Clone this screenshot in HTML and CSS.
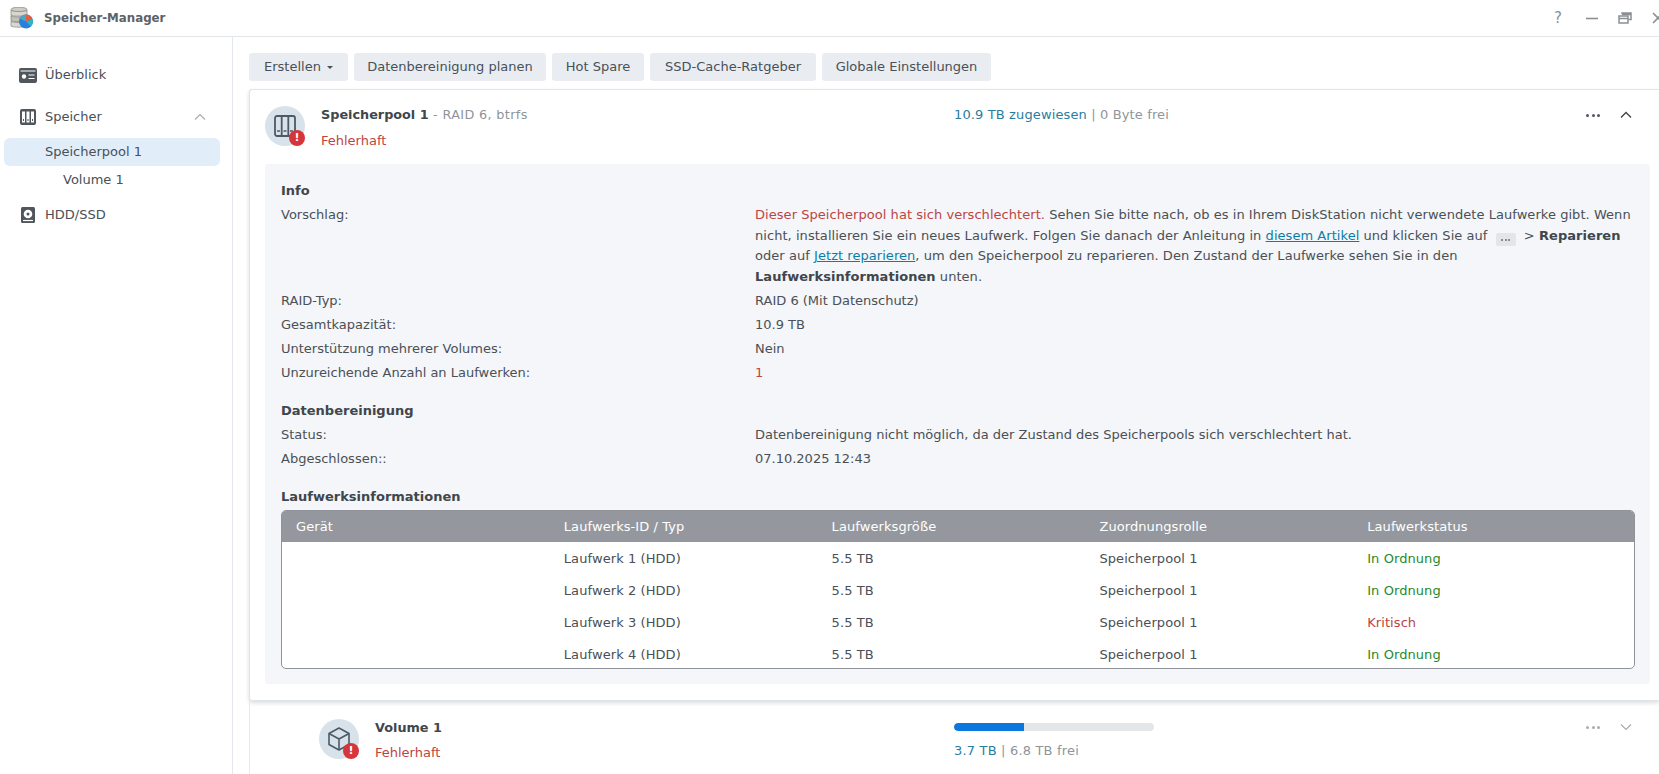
FILE: index.html
```html
<!DOCTYPE html>
<html lang="de">
<head>
<meta charset="utf-8">
<title>Speicher-Manager</title>
<link rel="stylesheet" href="styles.css">
</head>
<body>
<div class="app">
  <header class="titlebar">
    <svg class="logo" width="24" height="22" viewBox="0 0 24 22">
      <ellipse cx="9" cy="2.500" rx="8" ry="2.300" fill="#cfccc4" stroke="#8d8d88" stroke-width=".8"/>
      <path d="M1 3V8C1 9.500 17 9.500 17 8V3C17 5 1 5 1 3Z" fill="#d9d6cf" stroke="#8d8d88" stroke-width=".8"/>
      <path d="M1 8.500V13.500C1 15 17 15 17 13.500V8.500C17 10.500 1 10.500 1 8.500Z" fill="#c4c1b9" stroke="#85857f" stroke-width=".8"/>
      <path d="M1 14V19C1 20.500 17 20.500 17 19V14C17 16 1 16 1 14Z" fill="#d9d6cf" stroke="#8d8d88" stroke-width=".8"/>
      <circle cx="16" cy="14.500" r="7" fill="#2a7fde"/>
      <path d="M16 14.500V7.500A7 7 0 0 1 22.600 12.200Z" fill="#e2603c"/>
      <path d="M16 14.500L22.600 12.200A7 7 0 0 1 21 19.400Z" fill="#2fb3c6"/>
      <path d="M16 14.500V7.500A7 7 0 0 0 9.700 11.500Z" fill="#4ea5c9"/>
    </svg>
    <span class="app-title">Speicher-Manager</span>
    <div class="win-buttons">
      <span class="help">?</span>
      <svg width="14" height="14" viewBox="0 0 14 14"><path d="M1 7.500H13" stroke="#8b8f94" stroke-width="1.600"/></svg>
      <svg width="14" height="14" viewBox="0 0 14 14" fill="none" stroke="#8b8f94" stroke-width="1.500"><rect x="1" y="5" width="9" height="7"/><path d="M1 7.500H10M4 3V2H13V8.500H10.500M4 3.500H13"/></svg>
      <svg class="close" width="14" height="14" viewBox="0 0 14 14"><path d="M2 2L12 12M12 2L2 12" stroke="#8b8f94" stroke-width="1.600"/></svg>
    </div>
  </header>
  <div class="main">
    <nav class="sidebar">
      <div class="nav-item first">
        <svg width="18" height="15" viewBox="0 0 18 15"><rect width="18" height="15" rx="2" fill="#50565c"/><circle cx="5" cy="8.500" r="2.200" fill="#fff"/><path d="M9.500 7H15.500M9.500 10.500H15.500M1.500 3H16.500" stroke="#fff" stroke-width="1.200"/></svg>
        <span>Überblick</span>
      </div>
      <div class="nav-item second">
        <svg width="16" height="16" viewBox="0 0 16 16"><rect width="16" height="16" rx="2" fill="#50565c"/><path d="M2 2.500H5V13.500H2ZM6.500 2.500H9.500V13.500H6.500ZM11 2.500H14V13.500H11Z" fill="#fff"/><path d="M3.500 10V12M8 10V12M12.500 10V12" stroke="#50565c" stroke-width="1"/></svg>
        <span>Speicher</span>
        <svg class="nav-chevron" width="12" height="8" viewBox="0 0 12 8"><path d="M1 6.500L6 1.500L11 6.500" fill="none" stroke="#a9adb1" stroke-width="1.200"/></svg>
      </div>
      <div class="nav-sub selected">Speicherpool 1</div>
      <div class="nav-sub nested">Volume 1</div>
      <div class="nav-item third">
        <svg width="14" height="16" viewBox="0 0 14 16"><rect width="14" height="16" rx="1.500" fill="#50565c"/><circle cx="7" cy="7" r="4.300" fill="#fff"/><circle cx="7" cy="7" r="1.500" fill="#50565c"/><path d="M2 13.500H12" stroke="#fff" stroke-width="1.200"/></svg>
        <span>HDD/SSD</span>
      </div>
    </nav>
    <main class="content">
      <div class="toolbar">
        <button class="btn">Erstellen <i class="caret"></i></button>
        <button class="btn">Datenbereinigung planen</button>
        <button class="btn">Hot Spare</button>
        <button class="btn">SSD-Cache-Ratgeber</button>
        <button class="btn">Globale Einstellungen</button>
      </div>
      <section class="card">
        <div class="pool-head">
          <div class="round-icon">
            <svg width="22" height="22" viewBox="0 0 22 22" fill="none" stroke="#4d5a66" stroke-width="1.800"><rect x="1" y="1" width="20" height="20" rx="2"/><path d="M7.700 1V21M14.300 1V21"/><path d="M3 16H6M9.500 16H12.500M16 16H19" stroke-width="1.300"/></svg>
            <span class="alert">!</span>
          </div>
          <div class="head-text pool-text">
            <div class="head-title"><b>Speicherpool 1</b><span class="muted"> - RAID 6, btrfs</span></div>
            <div class="bad">Fehlerhaft</div>
          </div>
          <div class="usage-line"><span class="teal">10.9 TB zugewiesen</span><span class="muted"> | 0 Byte frei</span></div>
          <div class="head-actions">
            <span class="dots dark"><i></i><i></i><i></i></span>
            <svg width="12" height="8" viewBox="0 0 12 8"><path d="M1 6.500L6 1.500L11 6.500" fill="none" stroke="#3e4349" stroke-width="1.300"/></svg>
          </div>
        </div>
        <div class="panel">
          <h3 class="section">Info</h3>
          <div class="row">
            <div>Vorschlag:</div>
            <div class="para"><span class="bad">Dieser Speicherpool hat sich verschlechtert.</span> Sehen Sie bitte nach, ob es in Ihrem DiskStation nicht verwendete Laufwerke gibt. Wenn<br>nicht, installieren Sie ein neues Laufwerk. Folgen Sie danach der Anleitung in <a href="#">diesem Artikel</a> und klicken Sie auf <span class="chip"><i></i><i></i><i></i></span> &gt; <b>Reparieren</b><br>oder auf <a href="#">Jetzt reparieren</a>, um den Speicherpool zu reparieren. Den Zustand der Laufwerke sehen Sie in den<br><b>Laufwerksinformationen</b> unten.</div>
          </div>
          <div class="row"><div>RAID-Typ:</div><div>RAID 6 (Mit Datenschutz)</div></div>
          <div class="row"><div>Gesamtkapazität:</div><div>10.9 TB</div></div>
          <div class="row"><div>Unterstützung mehrerer Volumes:</div><div>Nein</div></div>
          <div class="row"><div>Unzureichende Anzahl an Laufwerken:</div><div class="red">1</div></div>
          <h3 class="section spaced">Datenbereinigung</h3>
          <div class="row"><div>Status:</div><div>Datenbereinigung nicht möglich, da der Zustand des Speicherpools sich verschlechtert hat.</div></div>
          <div class="row"><div>Abgeschlossen::</div><div>07.10.2025 12:43</div></div>
          <h3 class="section spaced table-title">Laufwerksinformationen</h3>
          <div class="table">
            <div class="tr th"><div>Gerät</div><div>Laufwerks-ID / Typ</div><div>Laufwerksgröße</div><div>Zuordnungsrolle</div><div>Laufwerkstatus</div></div>
            <div class="tr"><div></div><div>Laufwerk 1 (HDD)</div><div>5.5 TB</div><div>Speicherpool 1</div><div class="ok">In Ordnung</div></div>
            <div class="tr"><div></div><div>Laufwerk 2 (HDD)</div><div>5.5 TB</div><div>Speicherpool 1</div><div class="ok">In Ordnung</div></div>
            <div class="tr"><div></div><div>Laufwerk 3 (HDD)</div><div>5.5 TB</div><div>Speicherpool 1</div><div class="bad">Kritisch</div></div>
            <div class="tr"><div></div><div>Laufwerk 4 (HDD)</div><div>5.5 TB</div><div>Speicherpool 1</div><div class="ok">In Ordnung</div></div>
          </div>
        </div>
      </section>
      <section class="volume">
        <div class="round-icon">
          <svg width="24" height="26" viewBox="0 0 24 26" fill="none" stroke="#4d5a66" stroke-width="1.600" stroke-linejoin="round"><path d="M12 2L22 7.500V18.500L12 24L2 18.500V7.500Z"/><path d="M2 7.500L12 13L22 7.500M12 13V24"/></svg>
          <span class="alert">!</span>
        </div>
        <div class="head-text vol-text">
          <div class="head-title"><b>Volume 1</b></div>
          <div class="bad">Fehlerhaft</div>
        </div>
        <div class="vol-usage">
          <div class="bar"><div class="bar-fill"></div></div>
          <div class="vol-numbers"><span class="teal">3.7 TB</span><span class="muted"> | 6.8 TB frei</span></div>
        </div>
        <div class="head-actions vol-actions">
          <span class="dots"><i></i><i></i><i></i></span>
          <svg width="12" height="8" viewBox="0 0 12 8"><path d="M1 1.500L6 6.500L11 1.500" fill="none" stroke="#a9adb1" stroke-width="1.200"/></svg>
        </div>
      </section>
    </main>
  </div>
</div>
</body>
</html>
```
FILE: styles.css
```css
* { box-sizing: border-box; }
html, body { margin: 0; height: 100%; overflow: hidden; }
body { font-family: "DejaVu Sans", Verdana, sans-serif; font-size: 13px; line-height: 20px; color: #4a5056; background: #fff; }
.app { width: 1659px; height: 774px; display: flex; flex-direction: column; overflow: hidden; }

.titlebar { height: 37px; flex: none; display: flex; align-items: center; padding-left: 10px; border-bottom: 1px solid #e4e7ea; }
.logo { margin-right: 10px; }
.app-title { font-weight: bold; color: #5c6268; font-size: 11.800px; }
.win-buttons { margin-left: auto; display: flex; align-items: center; gap: 19px; margin-right: -6px; }
.help { font-size: 15px; color: #8b8f94; width: 14px; text-align: center; margin-right: 1px; }

.main { flex: 1; display: flex; min-height: 0; }
.sidebar { width: 233px; flex: none; border-right: 1px solid #e4e8ec; }
.nav-item { display: flex; align-items: center; height: 24px; padding-left: 19px; gap: 8px; }
.nav-item.first { margin-top: 26px; }
.nav-item.second { margin-top: 18px; margin-bottom: 9px; padding-left: 20px; gap: 9px; }
.nav-item.third { margin-top: 9px; padding-left: 21px; gap: 10px; }
.nav-chevron { margin-left: auto; margin-right: 26px; }
.nav-sub { height: 28px; line-height: 28px; padding-left: 41px; margin-left: 4px; width: 216px; border-radius: 6px; }
.nav-sub.selected { background: #e1eefa; }
.nav-sub.nested { padding-left: 59px; }

.content { flex: 1; min-width: 0; padding: 16px 0 0 16px; }
.toolbar { display: grid; grid-template-columns: 99px 192px 92px 166px 169px; gap: 6px; height: 28px; }
.btn { height: 28px; padding: 0; border: 0; border-radius: 3px; background: #e9edf2; color: #4a5056; font: inherit; }
.caret { display: inline-block; width: 0; height: 0; border: 3.500px solid transparent; border-top-color: #4a5056; border-bottom: 0; margin-left: 2px; vertical-align: middle; }

.card { margin-top: 8px; border: 1px solid #e0e5e9; border-right: 0; border-radius: 3px 0 0 3px; background: #fff; height: 612px; box-shadow: 0 2px 4px rgba(0, 0, 0, .14); }
.pool-head { height: 74px; display: flex; align-items: flex-start; padding: 15px 0 0 15px; }
.round-icon { position: relative; width: 40px; height: 40px; flex: none; border-radius: 50%; background: #d8e2ea; display: flex; align-items: center; justify-content: center; margin-top: 1px; }
.alert { position: absolute; right: 0; bottom: 0; width: 16px; height: 16px; border-radius: 50%; background: #d6353c; color: #fff; font-size: 11px; line-height: 16px; text-align: center; font-weight: bold; }
.head-text { margin-left: 16px; }
.pool-text { width: 633px; }
.head-title { margin-bottom: 6px; font-size: 12.800px; }
.head-title b { color: #40464c; }
.head-title .muted { letter-spacing: .35px; }
.vol-text { width: 579px; }
.vol-text .head-title { margin-bottom: 5px; }
.muted { color: #8f959a; }
.bad, .red { color: #bc4445; }
.teal { color: #2a7d9e; }
.ok { color: #268a2c; }
.head-actions { margin-left: auto; margin-right: 27px; display: flex; align-items: center; gap: 20px; height: 20px; }
.dots { display: inline-flex; gap: 2.500px; }
.dots i { width: 3px; height: 3px; border-radius: 50%; background: #a9adb1; }
.dots.dark i { background: #50565c; }
.usage-line { white-space: nowrap; letter-spacing: .13px; }

.panel { margin: 0 9px 0 15px; height: 520px; padding: 17px 15px 16px 16px; background: #f4f6f9; border-radius: 3px; }
.section { margin: 0 0 2px; font-size: 13px; line-height: 20px; font-weight: bold; color: #40464c; }
.section.spaced { margin-top: 16px; }
.table-title { margin-top: 15px; margin-bottom: 3px; }
.row { display: grid; grid-template-columns: 474px 1fr; padding: 2px 0; }
.para { line-height: 20.500px; white-space: nowrap; letter-spacing: .05px; }
.para b { color: #40464c; }
.para a { color: #0a7ea8; }
.chip { display: inline-flex; align-items: center; justify-content: center; gap: 1.500px; width: 20px; height: 13px; margin: 0 4px; background: #e2e5e9; border-radius: 2px; vertical-align: -1px; }
.chip i { width: 2px; height: 2px; border-radius: 50%; background: #6a7076; }

.table { height: 159px; border: 1px solid #8f9399; border-radius: 5px; background: #fff; overflow: hidden; }
.tr { display: grid; grid-template-columns: repeat(5, 267.800px); height: 32px; padding: 2px 0 0 14px; align-items: center; letter-spacing: .08px; }
.th { background: #94989e; color: #fff; height: 31px; padding-top: 0; }

.volume { height: 80px; display: flex; align-items: flex-start; padding: 17px 0 0 69px; border-left: 1px solid #e8ebee; }
.vol-usage { width: 200px; padding-top: 5px; }
.vol-numbers { letter-spacing: .18px; }
.bar { width: 200px; height: 8px; border-radius: 4px; background: #e4e7ea; overflow: hidden; margin-bottom: 10px; }
.bar-fill { width: 35%; height: 100%; background: #0b78e0; border-radius: 4px 0 0 4px; }
.vol-actions { margin-top: -1px; }
```
